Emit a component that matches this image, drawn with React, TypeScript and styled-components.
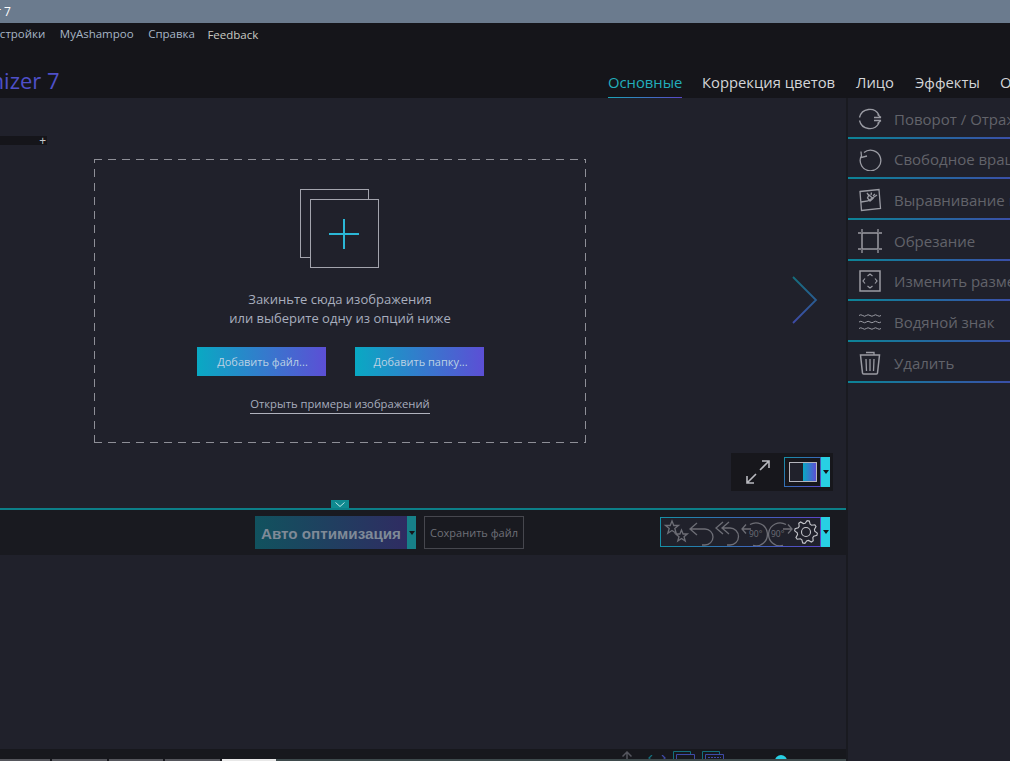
import React from 'react';
import styled, {createGlobalStyle} from "styled-components";

const sideItems = [
    {id: 'rotate', label: 'Поворот / Отражение'},
    {id: 'free', label: 'Свободное вращение'},
    {id: 'align', label: 'Выравнивание горизонта'},
    {id: 'crop', label: 'Обрезание'},
    {id: 'resize', label: 'Изменить размер'},
    {id: 'mark', label: 'Водяной знак'},
    {id: 'trash', label: 'Удалить'},
]

const tabs = [
    {name: 'Основные', width: 74},
    {name: 'Коррекция цветов', width: 134},
    {name: 'Лицо', width: 39},
    {name: 'Эффекты', width: 65},
    {name: 'Опции', width: 60},
]

const gearPoints = Array.from({length: 32}, (_, i) => {
    const angle = (i * Math.PI) / 16 + Math.PI / 32
    const r = i % 4 < 2 ? 11.4 : 8.8
    return `${(12 + r * Math.cos(angle)).toFixed(2)},${(12 + r * Math.sin(angle)).toFixed(2)}`
}).join(' ')

const SideIcon = ({id}: { id: string }) => {
    return <svg width="24" height="24" viewBox="0 0 24 24" fill="none" stroke="#9a9ba3" strokeWidth="1.3">
        {id === 'rotate' && <>
            <path d="M1.500 10.500A10.500 10.500 0 0 1 21 8"/>
            <path d="M1.500 13.500A10.500 10.500 0 0 0 21 16"/>
            <path d="M16 10.500h7M19.500 7.500l3.500 3M16 13.500h7M19.500 16.500l3.500-3"/>
        </>}
        {id === 'free' && <>
            <path d="M6 5.500A10.300 10.300 0 1 1 3 9.500"/>
            <path d="M3 4.500l.6 6 5.400-1.500"/>
        </>}
        {id === 'align' && <>
            <path d="M2 3.500l19-2 1.500 19-19 2z"/>
            <path d="M3 14l7-1 9-6"/>
            <path d="M11 7l4 3.500-3 2.500-2.500-3zM9 5l1.500 2M13.500 4.500l-.5 2.500M17 6l-2 2"/>
        </>}
        {id === 'crop' && <>
            <rect x="4" y="4" width="16" height="16" strokeWidth="1.500"/>
            <path d="M0 4h3M21 4h3M0 20h3M21 20h3M4 0v3M20 0v3M4 21v3M20 21v3"/>
        </>}
        {id === 'resize' && <>
            <rect x="2" y="2" width="20" height="20" strokeWidth="1.500"/>
            <path d="M9.500 7l2.500-2 2.500 2M9.500 17l2.500 2 2.500-2M7 9.500L5 12l2 2.500M17 9.500l2 2.500-2 2.500" strokeWidth="1.200"/>
        </>}
        {id === 'mark' && <g strokeWidth="1">
            <path d="M1 5.500q1.800-1.500 3.700 0t3.600 0 3.700 0 3.700 0 3.600 0 3.700 0"/>
            <path d="M1 12q1.800-1.500 3.700 0t3.600 0 3.700 0 3.700 0 3.600 0 3.700 0"/>
            <path d="M1 18.500q1.800-1.500 3.700 0t3.600 0 3.700 0 3.700 0 3.600 0 3.700 0"/>
        </g>}
        {id === 'trash' && <>
            <path d="M2.500 4h19l-2 18a1.500 1.500 0 0 1-1.500 1H6a1.500 1.500 0 0 1-1.500-1z" strokeWidth="1.500"/>
            <path d="M8 1.500h8V4M8 8l.5 12M12 8v12M16 8l-.5 12"/>
        </>}
    </svg>
}

const ToolIcons = () => {
    return <svg width="132" height="28" viewBox="0 0 132 28" fill="none" stroke="#6d6e76" strokeWidth="1.300">
        <path d="M11 3l1.800 4.500h4.700l-3.700 3 1.400 4.700L11 12.500 6.800 15.200l1.400-4.700-3.700-3h4.700z"/>
        <path d="M20.500 12l1.600 4h4.200l-3.300 2.700 1.200 4.300-3.700-2.500-3.700 2.500 1.200-4.300-3.300-2.700h4.200z"/>
        <path d="M36 5l-7 6 7 6M29 11h15a8 8 0 0 1 0 16h-3"/>
        <path d="M62 4l-7 6 7 6M68 4l-7 6 7 6M61 10h8a8.500 8.500 0 0 1 0 17h-3"/>
        <path d="M89 6.500A11.500 11.500 0 1 1 92 27.500"/>
        <path d="M81 11h9M85 6.500L81 11l4 4.500"/>
        <path d="M125 6.500A11.500 11.500 0 1 0 122 27.500"/>
        <path d="M122 11h9M127 6.500l4 4.500-4 4.500"/>
        <g fill="#6d6e76" stroke="none" fontFamily="'Open Sans', sans-serif" fontSize="8.500">
            <text x="88" y="19">90°</text>
            <text x="110" y="19">90°</text>
        </g>
    </svg>
}

const Gear = () => {
    return <svg width="24" height="24" viewBox="0 0 24 24" fill="none" stroke="#c4c5ca" strokeWidth="1.100">
        <polygon points={gearPoints}/>
        <circle cx="12" cy="12" r="4.500"/>
    </svg>
}

const App = () => {
    return <Page>
        <GlobalStyle/>
        <TitleBar><TitleText>r 7</TitleText></TitleBar>
        <Header>
            <MenuRow>
                <MenuItem>Настройки</MenuItem>
                <MenuItem>MyAshampoo</MenuItem>
                <MenuItem>Справка</MenuItem>
                <FeedbackItem>Feedback</FeedbackItem>
            </MenuRow>
            <BrandRow>
                <Brand>Photo Optimizer 7</Brand>
                <Tabs>
                    {tabs.map((t, i) => <Tab key={t.name} $active={i === 0} $width={t.width}>{t.name}</Tab>)}
                </Tabs>
            </BrandRow>
        </Header>
        <Body>
            <MainColumn>
                <Canvas>
                    <Strip><StripPlus>+</StripPlus></Strip>
                    <DropRow>
                        <DropZone>
                            <AddIcon>
                                <BackSheet/>
                                <FrontSheet>
                                    <svg width="30" height="30" viewBox="0 0 30 30" stroke="#2bb7d6" strokeWidth="2">
                                        <path d="M0 15h30M15 0v30"/>
                                    </svg>
                                </FrontSheet>
                            </AddIcon>
                            <Hint>Закиньте сюда изображения<br/>или выберите одну из опций ниже</Hint>
                            <AddButtons>
                                <AddButton>Добавить файл...</AddButton>
                                <AddButton>Добавить папку...</AddButton>
                            </AddButtons>
                            <SampleLink>Открыть примеры изображений</SampleLink>
                        </DropZone>
                        <NextArrow>
                            <svg width="26" height="48" viewBox="0 0 26 48" fill="none" strokeWidth="1.800">
                                <defs>
                                    <linearGradient id="arrow" gradientUnits="userSpaceOnUse" x1="0" y1="0" x2="0" y2="48">
                                        <stop offset="0" stopColor="#136f7c"/>
                                        <stop offset="1" stopColor="#3f4aa8"/>
                                    </linearGradient>
                                </defs>
                                <path d="M1 1l23 23L1 47" stroke="url(#arrow)"/>
                            </svg>
                        </NextArrow>
                    </DropRow>
                    <ViewRow>
                        <ViewPanel>
                            <svg width="26" height="26" viewBox="0 0 26 26" fill="none" stroke="#b9bac0" strokeWidth="1.600">
                                <path d="M15 11L24 2M17 2h7v7M11 15l-9 9M2 17v7h7"/>
                            </svg>
                            <SplitBox>
                                <SplitFrame><SplitFill/></SplitFrame>
                            </SplitBox>
                            <DropTab><Caret/></DropTab>
                        </ViewPanel>
                    </ViewRow>
                    <Collapse>
                        <svg width="10" height="5" viewBox="0 0 10 5" fill="none" stroke="#bfe6e8" strokeWidth="1">
                            <path d="M0.500 0.500L5 4.500l4.500-4"/>
                        </svg>
                    </Collapse>
                </Canvas>
                <Toolbar>
                    <AutoGroup>
                        <AutoButton>Авто оптимизация</AutoButton>
                        <AutoTab><Caret/></AutoTab>
                    </AutoGroup>
                    <SaveButton>Сохранить файл</SaveButton>
                    <ToolGroup>
                        <ToolBox>
                            <ToolIcons/>
                            <Gear/>
                        </ToolBox>
                        <DropTab><Caret/></DropTab>
                    </ToolGroup>
                </Toolbar>
                <Spacer/>
                <BottomBar>
                    <BottomIcons>
                        <svg width="10" height="12" viewBox="0 0 10 12" fill="none" stroke="#55565e" strokeWidth="1.500">
                            <path d="M.5 5.500L5 1l4.500 4.500M5 1v11"/>
                        </svg>
                        <NavIcons>
                            <svg width="18" height="4" viewBox="0 0 18 4" fill="none" strokeWidth="1.300">
                                <path d="M4 0L1 3l3 3" stroke="#136f7c"/>
                                <path d="M14 0l3 3-3 3" stroke="#3f4aa8"/>
                            </svg>
                        </NavIcons>
                        <svg width="22" height="14" viewBox="0 0 22 14" fill="none" strokeWidth="1">
                            <path d="M.5 14V.5h17V3" stroke="#136f7c"/>
                            <path d="M3.500 14V3.500h18V14" stroke="#3f4aa8"/>
                        </svg>
                        <svg width="22" height="14" viewBox="0 0 22 14" fill="none" strokeWidth="1">
                            <path d="M.5 14V.5h17V3" stroke="#136f7c"/>
                            <path d="M3.500 14V3.500h18V14" stroke="#3f4aa8"/>
                            <path d="M6 6.500h13" stroke="#3f4aa8" strokeDasharray="2 1"/>
                        </svg>
                        <Knob/>
                    </BottomIcons>
                </BottomBar>
                <Thumbs>
                    <Thumb/><Thumb/><Thumb/><Thumb/><Thumb $selected/><ThumbRest/>
                </Thumbs>
            </MainColumn>
            <Sidebar>
                {sideItems.map(item => <SideItem key={item.id}>
                    <SideIconBox><SideIcon id={item.id}/></SideIconBox>
                    <SideLabel>{item.label}</SideLabel>
                </SideItem>)}
            </Sidebar>
        </Body>
    </Page>
}

export default App

const GlobalStyle = createGlobalStyle`
  html, body {
    margin: 0;
    padding: 0;
    background: #20212b;
  }
  * {
    box-sizing: border-box;
  }
`
const Page = styled.div`
  width: 1010px;
  height: 761px;
  overflow: hidden;
  display: flex;
  flex-direction: column;
  font-family: "Open Sans", "Noto Sans", sans-serif;
  background: #20212b;
`
const TitleBar = styled.div`
  height: 23px;
  flex: none;
  background: #6b7b8e;
  display: flex;
  align-items: center;
`
const TitleText = styled.div`
  margin-left: -4px;
  color: #fff;
  font-size: 12px;
  white-space: nowrap;
`
const Header = styled.div`
  height: 75px;
  flex: none;
  background: #15151a;
  display: flex;
  flex-direction: column;
`
const MenuRow = styled.div`
  height: 21px;
  display: flex;
  align-items: center;
  margin-left: -15px;
  color: #a7b6c6;
  font-size: 11.5px;
  white-space: nowrap;
`
const MenuItem = styled.div`
  margin-right: 14.5px;
`
const FeedbackItem = styled.div`
  margin-top: 2px;
  margin-left: -2px;
  color: #c9c9c2;
`
const BrandRow = styled.div`
  flex: 1;
  display: flex;
  align-items: flex-end;
  justify-content: space-between;
  min-width: 0;
`
const Brand = styled.div`
  margin-left: -127px;
  padding-bottom: 3px;
  color: #4f50c8;
  font-size: 22px;
  white-space: nowrap;
`
const Tabs = styled.div`
  display: flex;
  gap: 20px;
  width: 402px;
  flex: none;
  overflow: hidden;
  white-space: nowrap;
`
const Tab = styled.div<{ $active?: boolean, $width: number }>`
  flex: none;
  width: ${p => p.$width}px;
  height: 28px;
  font-size: 14.8px;
  line-height: 24px;
  color: ${p => p.$active ? '#22aebc' : '#d4d5d8'};
  border-bottom: 1px solid transparent;
  border-image: ${p => p.$active ? 'linear-gradient(90deg, #1aa6b8, #5a46c8) 1' : 'none'};
`
const Body = styled.div`
  flex: 1;
  min-height: 0;
  display: flex;
`
const MainColumn = styled.div`
  width: 846px;
  flex: none;
  display: flex;
  flex-direction: column;
`
const Canvas = styled.div`
  height: 410px;
  flex: none;
  padding-top: 38px;
  display: flex;
  flex-direction: column;
`
const Strip = styled.div`
  width: 47px;
  height: 9px;
  background: #15151a;
  display: flex;
  align-items: center;
  justify-content: flex-end;
  padding-right: 1px;
`
const StripPlus = styled.span`
  color: #c8c8cc;
  font-size: 12px;
  line-height: 9px;
`
const DropRow = styled.div`
  margin-top: 14px;
  margin-left: 94px;
  display: flex;
  align-items: center;
`
const DropZone = styled.div`
  width: 492px;
  height: 284px;
  flex: none;
  background:
    repeating-linear-gradient(90deg, #8e8f97 0 8px, transparent 8px 14px) top / 100% 1px no-repeat,
    repeating-linear-gradient(90deg, #8e8f97 0 8px, transparent 8px 14px) bottom / 100% 1px no-repeat,
    repeating-linear-gradient(0deg, #8e8f97 0 8px, transparent 8px 14px) left / 1px 100% no-repeat,
    repeating-linear-gradient(0deg, #8e8f97 0 8px, transparent 8px 14px) right / 1px 100% no-repeat;
  display: flex;
  flex-direction: column;
  align-items: center;
  padding-top: 30px;
`
const AddIcon = styled.div`
  position: relative;
  width: 79px;
  height: 79px;
  margin-right: 2px;
`
const BackSheet = styled.div`
  width: 69px;
  height: 69px;
  border: 1px solid #a3a4ad;
`
const FrontSheet = styled.div`
  position: absolute;
  left: 10px;
  top: 10px;
  width: 69px;
  height: 69px;
  border: 1px solid #a3a4ad;
  background: #20212b;
  display: flex;
  align-items: center;
  justify-content: center;
`
const Hint = styled.div`
  margin-top: 22px;
  color: #a8aebe;
  font-size: 13px;
  line-height: 19px;
  text-align: center;
`
const AddButtons = styled.div`
  margin-top: 19px;
  display: flex;
  gap: 29px;
`
const AddButton = styled.button`
  width: 129px;
  height: 29px;
  border: none;
  padding: 0 0 0 3px;
  background: linear-gradient(90deg, #09a9c3, #5c4fd5);
  color: #bcd2e4;
  font-family: inherit;
  font-size: 11px;
`
const SampleLink = styled.div`
  margin-top: 20px;
  padding-bottom: 2px;
  border-bottom: 1px solid #b0b2bd;
  color: #a8aebe;
  font-size: 11.25px;
  line-height: 15px;
`
const NextArrow = styled.div`
  margin-left: 206px;
  margin-top: -2px;
  display: flex;
`
const ViewRow = styled.div`
  margin-top: 10px;
  padding-right: 13px;
  display: flex;
  justify-content: flex-end;
`
const ViewPanel = styled.div`
  width: 102px;
  height: 38px;
  background: #17171c;
  display: flex;
  align-items: center;
  padding-left: 14px;
`
const SplitBox = styled.div`
  width: 37px;
  height: 30px;
  margin-left: 13px;
  border: 1px solid;
  border-image: linear-gradient(135deg, #168fa6, #5a46c8) 1;
  display: flex;
  align-items: center;
  padding-left: 4px;
`
const SplitFrame = styled.div`
  width: 28px;
  height: 20px;
  border: 1px solid #b4b5bd;
  background: #20212b;
  display: flex;
  justify-content: flex-end;
`
const SplitFill = styled.div`
  width: 13px;
  background: linear-gradient(90deg, #09a9c3, #5c4fd5);
`
const DropTab = styled.div`
  width: 9px;
  height: 30px;
  background: #28cfe3;
  display: flex;
  align-items: center;
  justify-content: center;
`
const Caret = styled.div`
  width: 0;
  height: 0;
  border-left: 3.5px solid transparent;
  border-right: 3.5px solid transparent;
  border-top: 4px solid #15151a;
`
const Collapse = styled.div`
  width: 18px;
  height: 8px;
  margin-top: auto;
  margin-left: 331px;
  background: #0f8a90;
  display: flex;
  align-items: center;
  justify-content: center;
`
const Toolbar = styled.div`
  height: 47px;
  flex: none;
  border-top: 2px solid #0c7f88;
  background: #191a20;
  padding: 6px 0 0 255px;
  display: flex;
  align-items: flex-start;
`
const AutoGroup = styled.div`
  display: flex;
  height: 33px;
`
const AutoButton = styled.div`
  width: 152px;
  height: 33px;
  background: linear-gradient(90deg, #11525e, #2f2c62);
  color: #7f8a97;
  font-family: "Liberation Sans", Arial, sans-serif;
  font-size: 15.2px;
  font-weight: bold;
  line-height: 35px;
  padding-left: 6px;
  white-space: nowrap;
`
const AutoTab = styled.div`
  width: 9px;
  background: #178088;
  display: flex;
  align-items: center;
  justify-content: center;
`
const SaveButton = styled.div`
  width: 100px;
  height: 33px;
  margin-left: 8px;
  border: 1px solid #46474e;
  color: #6f7078;
  font-size: 11px;
  line-height: 31px;
  text-align: center;
  white-space: nowrap;
`
const ToolGroup = styled.div`
  margin-left: 136px;
  margin-top: 1px;
  display: flex;
`
const ToolBox = styled.div`
  width: 161px;
  height: 30px;
  border: 1px solid;
  border-image: linear-gradient(90deg, #168fa6, #5a46c8) 1;
  background: #20212b;
  display: flex;
  align-items: center;
  gap: 1px;
  overflow: hidden;
`
const Spacer = styled.div`
  flex: 1;
`
const BottomBar = styled.div`
  height: 10px;
  flex: none;
  background: #17181d;
  overflow: hidden;
  padding-top: 2px;
`
const BottomIcons = styled.div`
  margin-left: 622px;
  display: flex;
  align-items: flex-start;
  gap: 7px;
`
const NavIcons = styled.div`
  margin-top: 4px;
  margin-left: 9px;
  display: flex;
`
const Knob = styled.div`
  width: 12px;
  height: 12px;
  margin-left: 44px;
  margin-top: 4px;
  border-radius: 50%;
  background: #28cfe3;
  flex: none;
`
const Thumbs = styled.div`
  height: 2px;
  flex: none;
  display: flex;
  gap: 2px;
  background: #17181d;
`
const Thumb = styled.div<{ $selected?: boolean }>`
  width: 54.5px;
  background: ${p => p.$selected ? '#e8e8e8' : '#55565c'};
  &:first-child {
    width: 50px;
  }
`
const ThumbRest = styled.div`
  flex: 1;
  margin-left: -2px;
  background: #3e4a4c;
`
const Sidebar = styled.div`
  flex: 1;
  min-width: 0;
  border-left: 2px solid #191a20;
  overflow: hidden;
`
const SideItem = styled.div`
  height: 40.67px;
  border-bottom: 2px solid;
  border-image: linear-gradient(90deg, #0c8496, #3a4fa8) 1;
  padding-top: 3px;
  display: flex;
  align-items: center;
  white-space: nowrap;
`
const SideIconBox = styled.div`
  width: 46px;
  flex: none;
  padding-left: 10px;
  display: flex;
`
const SideLabel = styled.div`
  color: #62636a;
  font-size: 15px;
`
